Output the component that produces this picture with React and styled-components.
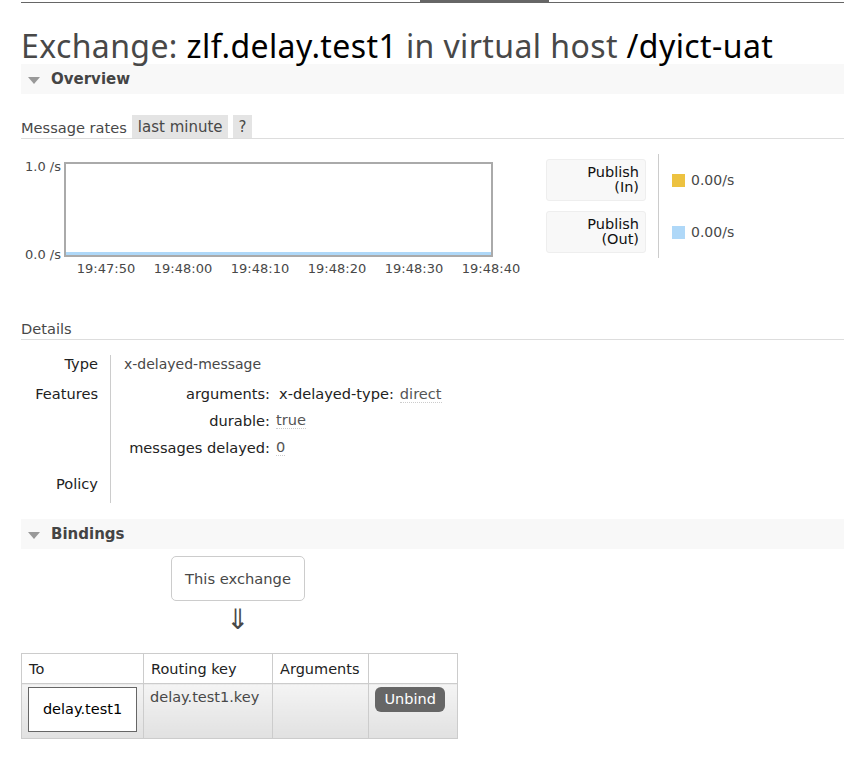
import React from 'react';
import styled, { createGlobalStyle } from 'styled-components';

const GlobalStyle = createGlobalStyle`
  html, body { margin: 0; padding: 0; background: #fff; }
  body {
    font-family: "DejaVu Sans", Verdana, sans-serif;
    font-size: 14px;
    color: #484848;
  }
`;

const Page = styled.div`
  padding-left: 21px;
`;

const TopRule = styled.div`
  display: flex;
  height: 3px;
  box-sizing: border-box;
  border-bottom: 1px solid #666;
`;

const ActiveTab = styled.div`
  margin-left: 399px;
  width: 129px;
  height: 2px;
  background: #666;
`;

const Title = styled.h1`
  margin: 24px 0 0;
  font-family: "Noto Sans", "Open Sans", sans-serif;
  font-weight: 400;
  font-size: 32px;
  letter-spacing: 0.4px;
  line-height: 37px;
  color: #484848;
  white-space: nowrap;
`;

const Strong = styled.span`
  color: #000;
`;

const SectionHeader = styled.div`
  display: flex;
  align-items: center;
  height: 30px;
  margin-top: ${(p) => p.$mt || 0}px;
  padding-left: 7px;
  background: #f8f8f8;
  font-weight: bold;
  font-size: 15px;
  color: #444;
`;

const Caret = styled.span`
  width: 0;
  height: 0;
  margin: 2px 11px 0 0;
  border-left: 6.5px solid transparent;
  border-right: 6.5px solid transparent;
  border-top: 7px solid #999;
`;

const Heading = styled.div`
  display: flex;
  align-items: flex-end;
  gap: 5px;
  margin-top: ${(p) => p.$mt}px;
  border-bottom: 1px solid #ddd;
`;

const HeadingText = styled.span`
  font-size: 14.6px;
  line-height: 21px;
  color: #484848;
`;

const Pill = styled.span`
  height: 23px;
  padding: 0 5px 0 6px;
  background: #e4e4e4;
  font-size: 15px;
  line-height: 24px;
  color: #484848;
`;

const ChartRow = styled.div`
  display: flex;
  align-items: flex-start;
  margin-top: 15px;
`;

const ChartArea = styled.div`
  display: grid;
  grid-template-columns: 40px 429px;
  grid-template-rows: 95px auto;
  column-gap: 3px;
  margin-top: 8px;
  font-size: 13px;
  color: #484848;
`;

const YAxis = styled.div`
  display: flex;
  flex-direction: column;
  justify-content: space-between;
  align-items: flex-end;
  margin: -2px 0 -4px;
  line-height: 13px;
  white-space: nowrap;
`;

const Plot = styled.div`
  box-sizing: border-box;
  display: flex;
  flex-direction: column;
  justify-content: flex-end;
  border: 2px solid #aaa;
  background: #fff;
`;

const Series = styled.svg`
  display: block;
  width: 100%;
  height: 3px;
`;

const Ticks = styled.div`
  grid-column: 2;
  display: flex;
  margin-top: 4px;
  padding-left: 3.5px;
  line-height: 15px;
`;

const Tick = styled.span`
  flex: 0 0 77px;
  text-align: center;
  white-space: nowrap;
`;

const Legend = styled.div`
  display: flex;
  margin-left: 53px;
`;

const LegendLabels = styled.div`
  display: flex;
  flex-direction: column;
  gap: 10px;
  padding: 5px 0;
`;

const LegendBox = styled.div`
  box-sizing: border-box;
  width: 100px;
  height: 42px;
  padding: 5px 6px 0 0;
  background: #f8f8f8;
  border: 1px solid #eee;
  border-radius: 3px;
  text-align: right;
  font-size: 14.5px;
  line-height: 15px;
  color: #111;
`;

const LegendValues = styled.div`
  display: flex;
  flex-direction: column;
  gap: 10px;
  margin-left: 12px;
  padding: 5px 0 5px 13px;
  border-left: 1px solid #ccc;
`;

const ValueRow = styled.div`
  display: flex;
  align-items: center;
  gap: 6px;
  height: 42px;
  font-size: 14px;
  color: #484848;
`;

const Swatch = styled.span`
  width: 13px;
  height: 13px;
  background: ${(p) => p.$color};
`;

const DetailsTable = styled.div`
  display: grid;
  grid-template-columns: 90px 1fr;
  margin-top: 15px;
  font-size: 14.6px;
  line-height: 18px;
`;

const Th = styled.div`
  box-sizing: border-box;
  padding-right: 12px;
  border-right: 1px solid #ccc;
  text-align: right;
  color: #222;
`;

const Td = styled.div`
  min-height: 18px;
  padding: 0 0 ${(p) => p.$pb}px 13px;
  font-size: ${(p) => p.$fs || 14.6}px;
  color: #484848;
`;

const FeatureGrid = styled.div`
  display: grid;
  grid-template-columns: 146px auto;
  column-gap: 6px;
  row-gap: 9px;
  justify-content: start;
`;

const FeatureKey = styled.div`
  text-align: right;
  color: #222;
  white-space: nowrap;
`;

const FeatureVal = styled.div`
  display: flex;
  align-items: baseline;
  gap: 6px;
  padding-left: ${(p) => (p.$nested ? 3 : 0)}px;
  white-space: nowrap;
`;

const Dotted = styled.span`
  display: inline-block;
  line-height: 16px;
  border-bottom: 1px dotted #ccc;
  color: #555;
`;

const Diagram = styled.div`
  display: flex;
  flex-direction: column;
  align-items: center;
  width: 134px;
  margin: 7px 0 0 150px;
`;

const ExchangeBox = styled.div`
  box-sizing: border-box;
  width: 134px;
  height: 45px;
  border: 1px solid #ccc;
  border-radius: 5px;
  text-align: center;
  font-size: 14.7px;
  line-height: 43px;
  color: #484848;
`;

const Arrow = styled.div`
  margin-top: 5px;
  font-size: 28px;
  line-height: 28px;
  color: #484848;
`;

const Table = styled.table`
  width: 436px;
  margin-top: 19px;
  table-layout: fixed;
  border-collapse: collapse;
  font-size: 14.5px;
  line-height: 18px;
`;

const HeadCell = styled.th`
  box-sizing: border-box;
  width: ${(p) => p.$w}px;
  padding: 6px 7px 5px;
  border: 1px solid #ccc;
  text-align: left;
  font-weight: normal;
  color: #222;
  white-space: nowrap;
`;

const BodyCell = styled.td`
  padding: ${(p) => p.$pt}px 6px 0;
  border: 1px solid #ccc;
  vertical-align: top;
  background: linear-gradient(to bottom, #f4f4f4, #e1e1e1);
  color: #484848;
  white-space: nowrap;
`;

const QueueBox = styled.div`
  box-sizing: border-box;
  width: 109px;
  height: 45px;
  margin: 0 0 6px;
  border: 1px solid #666;
  background: #fff;
  text-align: center;
  line-height: 43px;
  color: #000;
`;

const UnbindButton = styled.button`
  height: 25px;
  padding: 0 9.5px;
  border: none;
  border-radius: 6px;
  background: #666;
  color: #fff;
  font-family: "DejaVu Sans", Verdana, sans-serif;
  font-size: 14.5px;
  line-height: 25px;
`;

const ticks = ['19:47:50', '19:48:00', '19:48:10', '19:48:20', '19:48:30', '19:48:40'];

export default function App() {
  return (
    <>
      <GlobalStyle />
      <Page>
        <TopRule>
          <ActiveTab />
        </TopRule>
        <Title>
          Exchange: <Strong>zlf.delay.test1</Strong> in virtual host <Strong>/dyict-uat</Strong>
        </Title>

        <SectionHeader>
          <Caret />
          Overview
        </SectionHeader>

        <Heading $mt={21}>
          <HeadingText>Message rates</HeadingText>
          <Pill>last minute</Pill>
          <Pill>?</Pill>
        </Heading>

        <ChartRow>
          <ChartArea>
            <YAxis>
              <span>1.0 /s</span>
              <span>0.0 /s</span>
            </YAxis>
            <Plot>
              <Series viewBox="0 0 425 3" preserveAspectRatio="none">
                <rect x="0" y="0" width="425" height="3" fill="#afd8f8" />
              </Series>
            </Plot>
            <Ticks>
              {ticks.map((t) => (
                <Tick key={t}>{t}</Tick>
              ))}
            </Ticks>
          </ChartArea>

          <Legend>
            <LegendLabels>
              <LegendBox>
                Publish
                <br />
                (In)
              </LegendBox>
              <LegendBox>
                Publish
                <br />
                (Out)
              </LegendBox>
            </LegendLabels>
            <LegendValues>
              <ValueRow>
                <Swatch $color="#edc240" />
                0.00/s
              </ValueRow>
              <ValueRow>
                <Swatch $color="#afd8f8" />
                0.00/s
              </ValueRow>
            </LegendValues>
          </Legend>
        </ChartRow>

        <Heading $mt={42}>
          <HeadingText>Details</HeadingText>
        </Heading>

        <DetailsTable>
          <Th>Type</Th>
          <Td $pb={12} $fs={14}>x-delayed-message</Td>

          <Th>Features</Th>
          <Td $pb={18}>
            <FeatureGrid>
              <FeatureKey>arguments:</FeatureKey>
              <FeatureVal $nested>
                <FeatureKey>x-delayed-type:</FeatureKey>
                <Dotted>direct</Dotted>
              </FeatureVal>
              <FeatureKey>durable:</FeatureKey>
              <FeatureVal>
                <Dotted>true</Dotted>
              </FeatureVal>
              <FeatureKey>messages delayed:</FeatureKey>
              <FeatureVal>
                <Dotted>0</Dotted>
              </FeatureVal>
            </FeatureGrid>
          </Td>

          <Th>Policy</Th>
          <Td $pb={10} />
        </DetailsTable>

        <SectionHeader $mt={16}>
          <Caret />
          Bindings
        </SectionHeader>

        <Diagram>
          <ExchangeBox>This exchange</ExchangeBox>
          <Arrow>⇓</Arrow>
        </Diagram>

        <Table>
          <thead>
            <tr>
              <HeadCell $w={122}>To</HeadCell>
              <HeadCell $w={129}>Routing key</HeadCell>
              <HeadCell $w={96}>Arguments</HeadCell>
              <HeadCell $w={89}></HeadCell>
            </tr>
          </thead>
          <tbody>
            <tr>
              <BodyCell $pt={3}>
                <QueueBox>delay.test1</QueueBox>
              </BodyCell>
              <BodyCell $pt={4}>delay.test1.key</BodyCell>
              <BodyCell $pt={4}></BodyCell>
              <BodyCell $pt={3}>
                <UnbindButton>Unbind</UnbindButton>
              </BodyCell>
            </tr>
          </tbody>
        </Table>
      </Page>
    </>
  );
}
